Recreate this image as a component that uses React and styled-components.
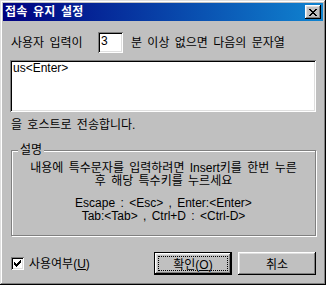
import React from 'react';
import styled, { createGlobalStyle } from 'styled-components';

const GlobalStyle = createGlobalStyle`
  html, body {
    margin: 0;
    padding: 0;
    background: #c0c0c0;
  }
  body {
    font-family: "Liberation Sans", "Noto Sans CJK KR", sans-serif;
    font-size: 12px;
    word-spacing: 2px;
    color: #000;
  }
`;

function App() {
  return (
    <>
      <GlobalStyle />
      <Window>
        <TitleBar>
          <Title>접속 유지 설정</Title>
          <CloseButton type="button">
            <svg width="8" height="7" viewBox="0 0 8 7">
              <path d="M0 0h2v1h1v1h2V1h1V0h2v1H7v1H6v1H5v1h1v1h1v1h1v1H6V6H5V5H3v1H2v1H0V6h1V5h1V4h1V3H2V2H1V1H0z" fill="#000" />
            </svg>
          </CloseButton>
        </TitleBar>
        <Body>
          <InputRow>
            <Label>사용자 입력이</Label>
            <NumberBox>3</NumberBox>
            <After>분 이상 없으면 다음의 문자열</After>
          </InputRow>
          <TextArea readOnly defaultValue="us<Enter>" />
          <SendText>을 호스트로 전송합니다.</SendText>
          <Group>
            <Legend>설명</Legend>
            <Desc>
              내용에 특수문자를 입력하려면 Insert키를 한번 누른
              <br />
              후 해당 특수키를 누르세요
            </Desc>
            <Desc $gap>
              Escape : &lt;Esc&gt; , Enter:&lt;Enter&gt;
              <br />
              Tab:&lt;Tab&gt; , Ctrl+D : &lt;Ctrl-D&gt;
            </Desc>
          </Group>
          <Footer>
            <CheckBox>
              <svg width="7" height="7" viewBox="0 0 7 7">
                <path d="M6 0h1v3H6v1H5v1H4v1H3v1H2V6H1V5H0V2h1v1h1v1h1V3h1V2h1V1h1z" fill="#000" />
              </svg>
            </CheckBox>
            <CheckLabel>
              사용여부(<u>U</u>)
            </CheckLabel>
            <Buttons>
              <Button type="button" $default>
                확인(<u>O</u>)
              </Button>
              <Button type="button">취소</Button>
            </Buttons>
          </Footer>
        </Body>
      </Window>
    </>
  );
}

export default App;

const Window = styled.div`
  width: 326px;
  height: 285px;
  box-sizing: border-box;
  padding: 3px;
  background: #c0c0c0;
  box-shadow: inset -1px -1px #000, inset 1px 1px #dfdfdf,
    inset -2px -2px #808080, inset 2px 2px #fff;
  display: flex;
  flex-direction: column;
`;

const TitleBar = styled.div`
  height: 18px;
  display: flex;
  align-items: center;
  justify-content: space-between;
  padding: 0 2px 0 2px;
  background: linear-gradient(to right, #000080, #1084d0);
`;

const Title = styled.span`
  color: #fff;
  font-weight: bold;
  line-height: 18px;
  letter-spacing: 0.2px;
`;

const CloseButton = styled.button`
  width: 16px;
  height: 14px;
  padding: 0;
  border: none;
  background: #c0c0c0;
  display: flex;
  align-items: center;
  justify-content: center;
  box-shadow: inset -1px -1px #000, inset 1px 1px #fff,
    inset -2px -2px #808080, inset 2px 2px #dfdfdf;
`;

const Body = styled.div`
  display: flex;
  flex-direction: column;
  padding: 11px 7px 0;
`;

const InputRow = styled.div`
  display: flex;
  align-items: center;
  height: 21px;
  padding-left: 1px;
`;

const Label = styled.span`
  width: 87px;
  line-height: 14px;
`;

const NumberBox = styled.div`
  width: 25px;
  height: 21px;
  box-sizing: border-box;
  padding: 2px 3px;
  background: #fff;
  line-height: 15px;
  box-shadow: inset 1px 1px #808080, inset -1px -1px #fff,
    inset 2px 2px #000, inset -2px -2px #dfdfdf;
`;

const After = styled.span`
  margin-left: 8px;
  line-height: 14px;
`;

const TextArea = styled.textarea`
  margin-top: 7px;
  height: 52px;
  box-sizing: border-box;
  padding: 1px 3px;
  border: none;
  outline: none;
  resize: none;
  background: #fff;
  font: inherit;
  word-spacing: normal;
  line-height: 14px;
  color: #000;
  box-shadow: inset 1px 1px #808080, inset -1px -1px #fff,
    inset 2px 2px #000, inset -2px -2px #dfdfdf;
`;

const SendText = styled.div`
  margin-top: 6px;
  padding-left: 1px;
  line-height: 14px;
`;

const Group = styled.div`
  position: relative;
  margin: 18px 0 0 1px;
  height: 86px;
  box-sizing: border-box;
  padding-top: 11px;
  border: 1px solid #808080;
  box-shadow: inset 1px 1px #fff, 1px 1px #fff;
  text-align: center;
`;

const Legend = styled.span`
  position: absolute;
  top: -8px;
  left: 6px;
  padding: 0 2px;
  background: #c0c0c0;
  line-height: 14px;
`;

const Desc = styled.p`
  margin: ${(p) => (p.$gap ? '9px' : '0')} 0 0;
  line-height: 13px;
`;

const Footer = styled.div`
  margin-top: 16px;
  height: 23px;
  display: flex;
  align-items: center;
  padding-left: 1px;
`;

const CheckBox = styled.div`
  width: 13px;
  height: 13px;
  box-sizing: border-box;
  background: #fff;
  display: flex;
  align-items: center;
  justify-content: center;
  box-shadow: inset 1px 1px #808080, inset -1px -1px #fff,
    inset 2px 2px #000, inset -2px -2px #dfdfdf;
`;

const CheckLabel = styled.span`
  margin-left: 5px;
  line-height: 14px;
`;

const Buttons = styled.div`
  margin-left: auto;
  display: flex;
  gap: 6px;
`;

const Button = styled.button`
  position: relative;
  width: 78px;
  height: 23px;
  padding: 0;
  border: ${(p) => (p.$default ? '1px solid #000' : 'none')};
  background: #c0c0c0;
  font: inherit;
  color: #000;
  box-shadow: inset -1px -1px #000, inset 1px 1px #fff,
    inset -2px -2px #808080, inset 2px 2px #dfdfdf;

  &::after {
    content: '';
    display: ${(p) => (p.$default ? 'block' : 'none')};
    position: absolute;
    inset: 3px;
    border: 1px dotted #000;
  }
`;
